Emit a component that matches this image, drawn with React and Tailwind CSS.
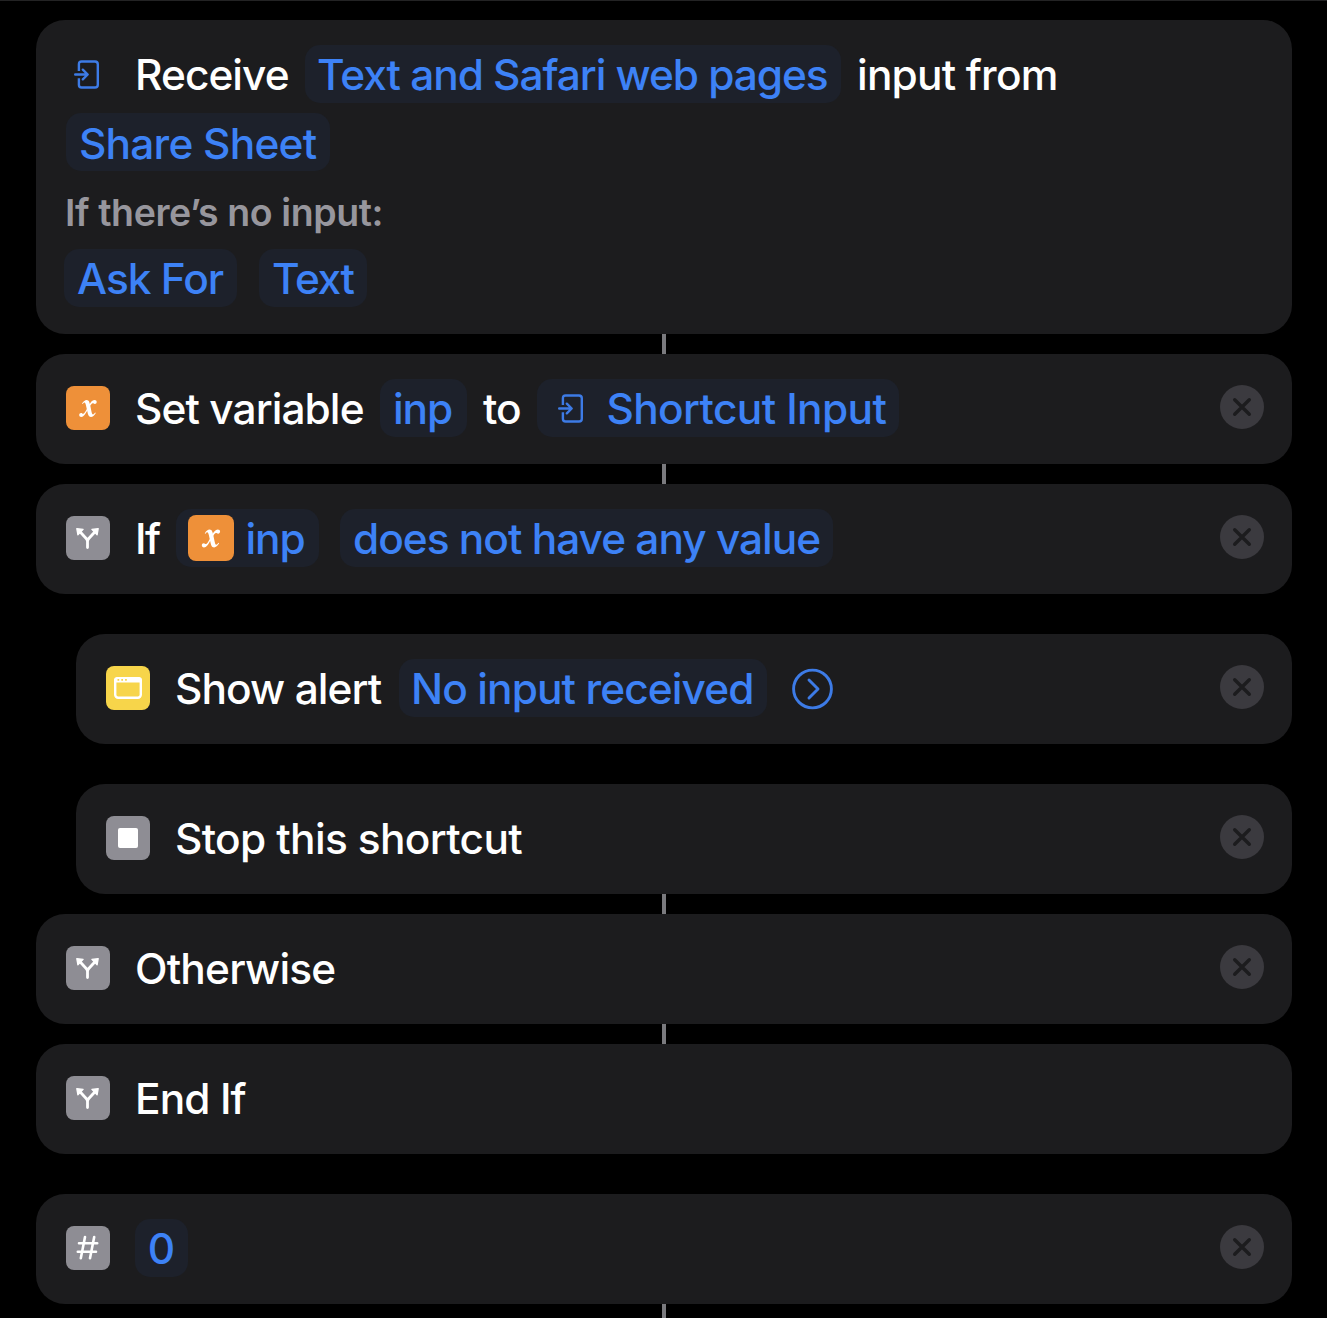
const Text = ({ children, className = "" }) => (
  <span className={`whitespace-pre pt-[2px] text-[42.4px] leading-[58px] ${className}`}>{children}</span>
);

const Pill = ({ children, className = "", pad = "pt-[2px]" }) => (
  <span className={`flex h-[58px] shrink-0 items-center whitespace-pre rounded-[15px] bg-[#1d212b] text-[42.4px] leading-[58px] text-[#3d82f6] ${pad} ${className}`}>
    {children}
  </span>
);

const InputIcon = () => (
  <svg className="shrink-0" width="28" height="32" viewBox="0 0 28 32" fill="none" stroke="#3d7be6" strokeWidth="2.4" strokeLinecap="round" strokeLinejoin="round">
    <path d="M4.9 12V5.2Q4.9 2.5 7.6 2.5H21Q23.8 2.5 23.8 5.2V25.8Q23.8 28.5 21 28.5H7.6Q4.9 28.5 4.9 25.8V19.2" strokeLinecap="butt" />
    <path d="M1.2 15.5H13.2M8.8 10.7L13.7 15.5L8.8 20.3" />
  </svg>
);

const Tile = ({ children, className = "" }) => (
  <span className={`flex size-11 shrink-0 items-center justify-center rounded-[8px] ${className}`}>{children}</span>
);

const VariableGlyph = ({ size = 44 }) => (
  <svg width={size} height={size} viewBox="0 0 44 44" fill="#fff">
    <path d="M16 17.6C17.6 15 19 13.9 20.6 13.9C23.2 13.9 23.6 16.8 24.3 19.8L25.4 25.2C25.9 27.6 26.3 28.5 27 28.5C27.7 28.5 28.4 27.6 29.1 26.6L29.8 27.1C28.2 29.8 26.7 31 25 31C22.5 31 22 28.5 21.4 25.8L20 19.4C19.5 17.2 19.1 16.4 18.4 16.4C17.8 16.4 17.3 17 16.7 18Z" />
    <path d="M22.6 19.6C24.6 16.2 26.2 13.9 28.4 13.9C29.9 13.9 30.7 14.7 30.7 15.9C30.7 17.1 29.9 17.9 28.8 17.9C27.9 17.9 27.5 17.2 26.8 17.2C25.8 17.2 24.6 19 23 21.5L21.6 24.1C19.3 28.2 17.7 31 15.3 31C14 31 13.2 30.2 13.2 29C13.2 27.9 14 27 15.1 27C16.1 27 16.4 27.8 17.1 27.8C18.1 27.8 19.6 25.2 21.2 22.4Z" />
  </svg>
);

const BranchTile = () => (
  <Tile className="bg-[#8e8d94]">
    <svg width="44" height="44" viewBox="0 0 44 44" fill="none" stroke="#fff" strokeWidth="2.8" strokeLinecap="round" strokeLinejoin="round">
      <path d="M21.5 31.6V25.6Q21.5 24 20.2 22.5L14 15.8M21.5 25.6Q21.5 24 22.8 22.5L29 15.8" />
      <path d="M10.8 12.6L17.1 13.4L11.9 18.8ZM32.2 12.6L25.9 13.4L31.1 18.8Z" fill="#fff" strokeWidth="1.3" />
    </svg>
  </Tile>
);

const Close = () => (
  <svg className="mb-[2px] ml-auto shrink-0" width="44" height="44" viewBox="0 0 44 44">
    <circle cx="22" cy="22" r="22" fill="#3b3a3f" />
    <path d="M14.7 14.7L29.3 29.3M29.3 14.7L14.7 29.3" stroke="#1c1c1e" strokeWidth="3.4" strokeLinecap="round" />
  </svg>
);

const Row = ({ children, className = "" }) => (
  <div className={`flex h-[110px] shrink-0 items-center rounded-[29px] bg-[#1c1c1e] pb-[2px] pl-[30px] pr-7 ${className}`}>{children}</div>
);

const Connector = ({ className = "h-5" }) => <div className={`mx-auto w-1 shrink-0 bg-[#7a7a7e] ${className}`} />;

export default function App() {
  return (
    <main className="flex h-[1318px] w-[1327px] flex-col overflow-hidden border-t border-[#232324] bg-black pl-9 pr-[35px] pt-[19px] font-['Inter',sans-serif] font-[450] text-white">
      <section className="h-[314px] shrink-0 rounded-[29px] bg-[#1c1c1e] pl-7 pt-[25px]">
        <div className="flex h-[58px] items-center">
          <span className="ml-[9.5px] flex w-[61.5px] pt-[1px]"><InputIcon /></span>
          <Text className="w-[170px] tracking-[-0.95px]">Receive</Text>
          <Pill className="w-[536px] pl-[12px] tracking-[-1.05px]">Text and Safari web pages</Pill>
          <Text className="ml-4 tracking-[-0.8px]">input from</Text>
        </div>
        <Pill className="ml-[2px] mt-[10px] w-[264px] pl-[13px] tracking-[-0.78px]" pad="pt-[4px]">Share Sheet</Pill>
        <p className="ml-px mt-[17px] h-[50px] whitespace-pre text-[37.5px] font-[560] leading-[50px] text-[#97969d] tracking-[-0.4px]">If there’s no input:</p>
        <div className="mt-[11px] flex gap-[22px]">
          <Pill className="w-[173px] pl-[13px] tracking-[-1px]">Ask For</Pill>
          <Pill className="w-[108px] pl-[13px] tracking-[-1.4px]">Text</Pill>
        </div>
      </section>
      <Connector />
      <Row>
        <Tile className="bg-[#ee9039]"><VariableGlyph /></Tile>
        <Text className="ml-[25px] w-[245px] tracking-[-0.92px]">Set variable</Text>
        <Pill className="w-[87px] pl-[13px] tracking-[-1.1px]">inp</Pill>
        <Text className="ml-4 w-[54px] tracking-[-1px]">to</Text>
        <Pill className="w-[362px] pl-[20.5px] tracking-[-0.63px]">
          <InputIcon /><span className="ml-[21px]">Shortcut Input</span>
        </Pill>
        <Close />
      </Row>
      <Connector />
      <Row>
        <BranchTile />
        <Text className="ml-[25px] w-[41px] tracking-[-1.5px]">If</Text>
        <Pill className="w-[143px] pl-[11.5px] tracking-[-1.1px]">
          <span className="mb-[2px] flex size-[46px] items-center justify-center rounded-[8px] bg-[#ee9039]"><VariableGlyph size={46} /></span>
          <span className="ml-3">inp</span>
        </Pill>
        <Pill className="ml-[21px] w-[493px] pl-[13px] tracking-[-1px]">does not have any value</Pill>
        <Close />
      </Row>
      <Row className="ml-10 mt-10">
        <Tile className="bg-[#f7d54a]">
          <svg width="44" height="44" viewBox="0 0 44 44">
            <rect x="9.2" y="12.2" width="25.6" height="19.6" rx="3" fill="none" stroke="#fff" strokeWidth="2.4" />
            <path d="M8 16.4V14Q8 11 11.5 11H32.5Q36 11 36 14V16.4Z" fill="#fff" />
            <path d="M11.5 13.8h1.7M15.3 13.8h1.7M19.1 13.8h1.7" stroke="#f7d54a" strokeWidth="1.7" />
          </svg>
        </Tile>
        <Text className="ml-[25px] w-[224px] tracking-[-0.92px]">Show alert</Text>
        <Pill className="w-[368px] pl-[12px] tracking-[-0.9px]">No input received</Pill>
        <svg className="ml-[25px] mt-px shrink-0" width="42" height="42" viewBox="0 0 42 42" fill="none" stroke="#3d7be6" strokeWidth="2.9" strokeLinecap="round" strokeLinejoin="round">
          <circle cx="20.5" cy="21" r="18.9" /><path d="M17 12L26 21L17 30" />
        </svg>
        <Close />
      </Row>
      <Row className="ml-10 mt-10">
        <Tile className="bg-[#8e8d94]"><span className="size-5 rounded-[2px] bg-white" /></Tile>
        <Text className="ml-[25px] tracking-[-0.65px]">Stop this shortcut</Text>
        <Close />
      </Row>
      <Connector />
      <Row><BranchTile /><Text className="ml-[25px] tracking-[-0.8px]">Otherwise</Text><Close /></Row>
      <Connector />
      <Row><BranchTile /><Text className="ml-[25px] tracking-[-0.9px]">End If</Text></Row>
      <Row className="mt-10">
        <Tile className="bg-[#8e8d94]">
          <svg width="44" height="44" viewBox="0 0 44 44" fill="none" stroke="#fff" strokeWidth="2.6" strokeLinecap="round">
            <path d="M19 11L14.8 32.2M28.2 11L24 32.2M13 17.3H31.2M11.8 25.8H30" />
          </svg>
        </Tile>
        <Pill className="ml-[25px] w-[53px] justify-center">0</Pill>
        <Close />
      </Row>
      <Connector className="h-[14px]" />
    </main>
  );
}
